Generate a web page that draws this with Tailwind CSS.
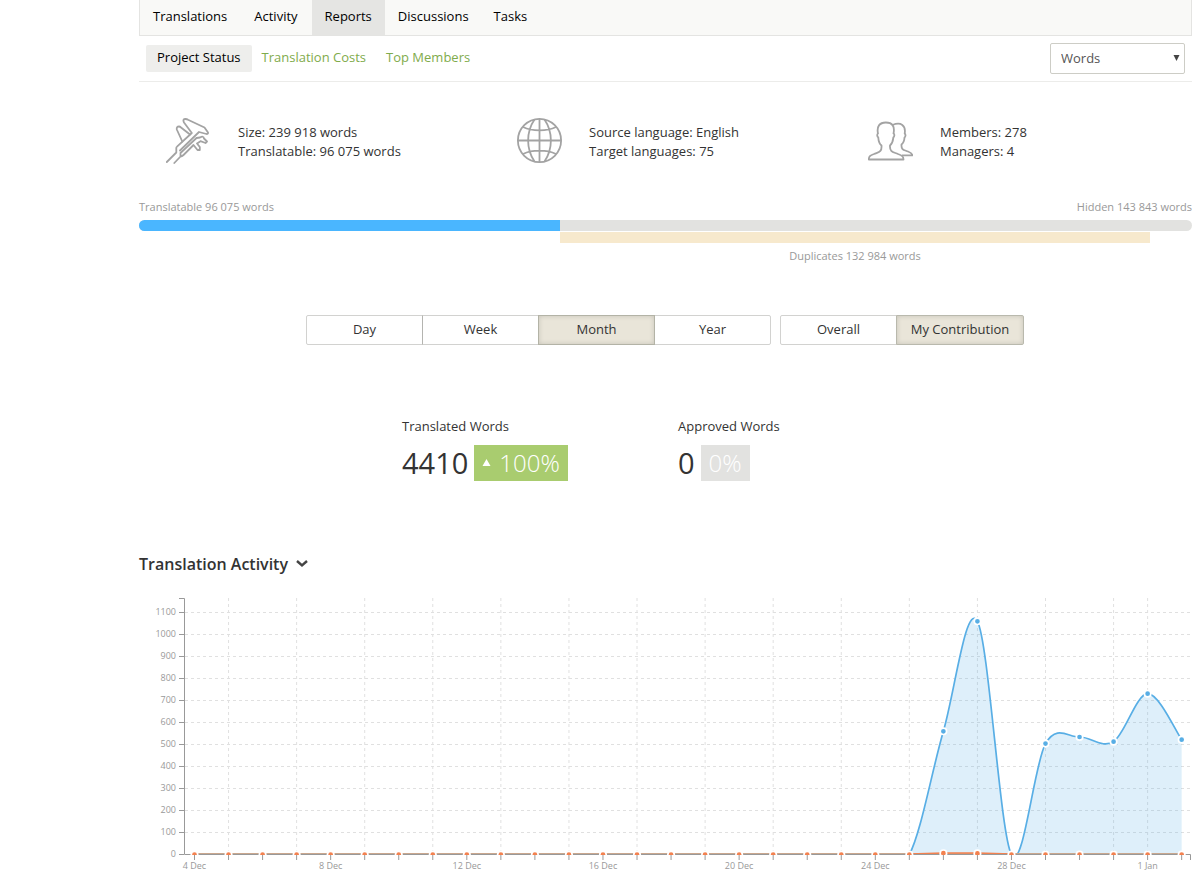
<!DOCTYPE html>
<html lang="en">
<head>
<meta charset="utf-8">
<meta name="viewport" content="width=device-width, initial-scale=1">
<title>Reports</title>
<script src="https://cdn.jsdelivr.net/npm/@tailwindcss/browser@4"></script>
</head>
<body class="bg-white pl-[139px] font-['Open_Sans',sans-serif] text-[13px] leading-[19px] text-[#333] overflow-x-hidden">
<nav aria-label="Project" class="flex h-9 gap-px border border-t-0 border-[#e4e4e2] bg-[#f9f9f7] text-black leading-8">
  <a href="#" class="px-[13px]">Translations</a>
  <a href="#" class="px-[13px]">Activity</a>
  <a href="#" aria-current="page" class="bg-[#e5e5e3] px-[13px]">Reports</a>
  <a href="#" class="px-3">Discussions</a>
  <a href="#" class="px-3">Tasks</a>
</nav>
<div class="flex items-center justify-between border-b border-[#ececea] px-[7px] pt-[7px] pb-[7px]">
  <nav aria-label="Reports" class="flex h-[27px] text-[#7fab4c] leading-[25px]">
    <a href="#" aria-current="page" class="rounded-xs bg-[#eeeeec] px-[11px] text-black">Project Status</a>
    <a href="#" class="px-[10px]">Translation Costs</a>
    <a href="#" class="px-[10px]">Top Members</a>
  </nav>
  <div class="relative w-[135px]">
    <select aria-label="Unit" class="block h-[31px] w-full appearance-none rounded-xs border border-[#cdcdc6] bg-white pl-[10px] text-[#555]">
      <option>Words</option>
      <option>Strings</option>
    </select>
    <svg class="pointer-events-none absolute top-3 right-[5px]" width="7" height="6" viewBox="0 0 7 6" aria-hidden="true"><path d="M.5 0h6L3.5 6z" fill="#444"/></svg>
  </div>
</div>

<main>
  <section class="grid grid-cols-3 pt-9">
    <div class="flex items-center">
      <svg class="mx-[27px]" width="45" height="46" viewBox="0 0 45 46" fill="none" stroke="#a3a3a3" stroke-width="1.8" stroke-linejoin="round" stroke-linecap="round" aria-hidden="true">
        <path d="M.8 44L10.300 34.500V30Q10.300 29.200 11 28.600L25.800 15L18 4.500Q16.300 1 19.500 1Q21 1 22 1.800L38.500 9.500L42 14.500Q42.300 16 40.500 16L33 14L14 32.500"/>
        <path d="M16.300 23.500L10.800 11.500Q10.300 8.500 13 8.500Q14 8.500 15 9.500L24 16.500"/>
        <path d="M8.300 45L14.500 38.500V35L30.500 20L34 19.500Q37.500 17.500 38 20.500L41 23.500L39.500 25L34.500 23.200L31 25.500L33.800 29V32H31.500L27.500 27L17.500 37Q16 38.500 14.500 38.500"/>
      </svg>
      <p class="pt-0.5">Size: 239 918 words<br>Translatable: 96 075 words</p>
    </div>
    <div class="flex items-center">
      <svg class="mx-[27px]" width="45" height="46" viewBox="0 0 45 46" fill="none" stroke="#a3a3a3" stroke-width="1.8" aria-hidden="true">
        <circle cx="22.500" cy="22.500" r="21.600"/>
        <path d="M22.500 1V44M.7 22.500H44.300M17.500 1.500C9 14 9 31 17.500 43.500M27.500 1.500C36 14 36 31 27.500 43.500M6 9C15 13.500 30 13.500 39 9M6 36C15 31.500 30 31.500 39 36"/>
      </svg>
      <p class="pt-0.5">Source language: English<br>Target languages: 75</p>
    </div>
    <div class="flex items-center">
      <svg class="mx-[27px]" width="45" height="46" viewBox="0 0 45 46" fill="none" stroke="#a3a3a3" stroke-width="1.8" stroke-linejoin="round" aria-hidden="true">
        <path d="M13.500 27.500C10.500 25 10.500 22.500 10.300 19.500C8.800 18.500 9 16 10 15.500C8.500 8.500 11.500 4.500 17.800 4.500C24.500 4.500 27 8.500 25.500 15.500C26.800 16 26.500 18.500 25.300 19.500C25 22.500 25 25 22 27.500C21.500 34.500 25.500 34 30 36C34 37.500 35.500 38.500 35.500 41.500H.8C.8 38.500 2 37.500 6 36C10.500 34 14 34.500 13.500 27.500Z"/>
        <path d="M24.500 7C33 3.500 38 7.500 36.700 15.500C38 16.500 37.500 19 36.500 19.500C36.300 23 35.500 25 33.500 26.500C33 32.500 36.500 32 40 33.500C43.500 35 44.300 35.500 44.300 37.300H34"/>
      </svg>
      <p class="pt-0.5">Members: 278<br>Managers: 4</p>
    </div>
  </section>

  <section class="pt-[34px] text-[11px] leading-[18px] text-[#999]">
    <div class="flex justify-between"><span>Translatable 96 075 words</span><span>Hidden 143 843 words</span></div>
    <div class="mt-1 h-[11px] overflow-hidden rounded-full bg-[#e2e2e0]"><div class="h-full bg-[#4ab6ff]" style="width:40%"></div></div>
    <div class="mt-px" style="margin-left:40%;width:56%"><div class="h-[11px] bg-[#f7e9cd]"></div><p class="mt-1 text-center">Duplicates 132 984 words</p></div>
  </section>

  <div class="flex justify-center gap-[9px] pt-[50px] pr-px">
    <div role="group" aria-label="Period" class="flex">
      <button class="h-[30px] w-[117px] rounded-l-xs border border-[#d2d2d0] pb-0.5">Day</button>
      <button class="-ml-px h-[30px] w-[117px] border border-[#d2d2d0] border-l-[#b4b4b0] pb-0.5">Week</button>
      <button aria-pressed="true" class="relative -ml-px h-[30px] w-[117px] border border-[#b3b3a6] bg-[#e9e5d9] pb-0.5 shadow-[inset_0_0_5px_rgba(0,0,0,0.15)]">Month</button>
      <button class="-ml-px h-[30px] w-[117px] rounded-r-xs border border-[#d2d2d0] pb-0.5">Year</button>
    </div>
    <div role="group" aria-label="Scope" class="flex">
      <button class="h-[30px] w-[117px] rounded-l-xs border border-[#d2d2d0] pb-0.5">Overall</button>
      <button aria-pressed="true" class="relative -ml-px h-[30px] w-32 rounded-r-xs border border-[#b9b9ad] bg-[#e9e5d9] pb-0.5 shadow-[inset_0_0_5px_rgba(0,0,0,0.15)]">My Contribution</button>
    </div>
  </div>

  <section class="grid grid-cols-[276px_251px] justify-center pt-[72px]">
    <div>
      <h3>Translated Words</h3>
      <div class="mt-[9px] flex h-9 items-center gap-1.5">
        <span class="pb-0.5 text-[29px]">4410</span>
        <span class="flex h-full items-center gap-2 bg-[#a9cc6f] px-2 text-2xl font-light text-white"><svg width="9" height="8" viewBox="0 0 9 8" aria-hidden="true"><path d="M4.500 0L8.500 7H.5z" fill="#fff"/></svg>100%</span>
      </div>
    </div>
    <div>
      <h3>Approved Words</h3>
      <div class="mt-[9px] flex h-9 items-center gap-1.5">
        <span class="pb-0.5 text-[29px]">0</span>
        <span class="flex h-full items-center bg-[#e2e2e0] px-2 text-2xl font-light text-white">0%</span>
      </div>
    </div>
  </section>

  <section class="pt-[71px]">
    <h2><button class="flex items-center gap-2 text-base leading-6 font-semibold">Translation Activity
      <svg width="12" height="8" viewBox="0 0 12 8" fill="none" stroke="#444" stroke-width="2.400" aria-hidden="true"><path d="M1 1L6 5.500L11 1"/></svg></button></h2>
    <svg id="chart" role="img" aria-label="Words translated per day" class="mt-[14px] block w-full" viewBox="0 0 1053 290" font-size="9" fill="#999"></svg>
  </section>
</main>

<script>
  const translated = Array(30).fill(0);
  [560, 1060, 0, 504, 534, 513, 731, 522].forEach((v, i) => translated[22 + i] = v);
  const approved = Array(30).fill(0);
  approved[22] = 6; approved[23] = 5;
  const base = 264.5;
  const x = i => 55.5 + 34.04 * i;
  const y = v => base - v * 0.22;
  const spline = data => {
    const p = data.map((v, i) => [x(i), y(v)]);
    const at = i => p[Math.max(0, Math.min(p.length - 1, i))];
    let d = `M${p[0]}`;
    for (let i = 0; i < p.length - 1; i++) {
      const [a, b, c, e] = [at(i - 1), at(i), at(i + 1), at(i + 2)];
      d += `C${b[0] + (c[0] - a[0]) / 6},${b[1] + (c[1] - a[1]) / 6} ${c[0] - (e[0] - b[0]) / 6},${c[1] - (e[1] - b[1]) / 6} ${c}`;
    }
    return d;
  };
  let s = '<clipPath id="plot"><rect x="45" y="0" width="1008" height="265"/></clipPath>';
  // Grid
  s += '<g stroke="#e0e0e0" stroke-dasharray="3 3">';
  for (let v = 100; v <= 1100; v += 100) s += `<path d="M46 ${y(v)}H1053"/>`;
  for (let i = 1; i < 28; i += 2) s += `<path d="M${x(i)} 8V264"/>`;
  s += `<path d="M${x(28)} 8V264"/></g>`;
  // Series lines and area
  const line = spline(translated);
  s += '<g clip-path="url(#plot)">';
  s += `<path d="${line}V${base}H${x(0)}Z" fill="#58aee5" fill-opacity=".2"/><path d="${line}" fill="none" stroke="#58aee5" stroke-width="1.700"/>`;
  s += `<path d="M${x(0)} 264H${x(29)}" fill="none" stroke="#c9a78e" stroke-width="2"/>`;
  s += `<path d="M${x(21)} 264L${x(22)} 263L${x(23)} 263L${x(24)} 264" fill="none" stroke="#f3814f" stroke-width="1.700"/>`;
  s += '</g>';
  // Axes
  s += '<g fill="none" stroke="#999"><path d="M40 8.500H45.500V264.500H1051.500V270"/>';
  for (let v = 0; v <= 1100; v += 100) s += `<path d="M40 ${y(v)}H45"/>`;
  for (let i = 0; i < 30; i++) s += `<path d="M${x(i)} 265V270"/>`;
  s += '</g>';
  // Points
  const dot = (i, v, c) => `<circle cx="${x(i)}" cy="${y(v)}" r="3.200" fill="${c}" stroke="#fff" stroke-width="1.700"/>`;
  s += '<g clip-path="url(#plot)">';
  translated.forEach((v, i) => { if (v) s += dot(i, v, '#58aee5'); });
  approved.forEach((v, i) => s += dot(i, v, '#f3814f'));
  s += '</g>';
  // Labels
  for (let v = 0; v <= 1100; v += 100) s += `<text x="37" y="${Math.floor(y(v)) + 3}" text-anchor="end">${v}</text>`;
  ['4 Dec', '8 Dec', '12 Dec', '16 Dec', '20 Dec', '24 Dec', '28 Dec', '1 Jan'].forEach((t, k) => s += `<text x="${x(k * 4)}" y="279" text-anchor="middle">${t}</text>`);
  document.getElementById('chart').innerHTML = s;
</script>
</body>
</html>
